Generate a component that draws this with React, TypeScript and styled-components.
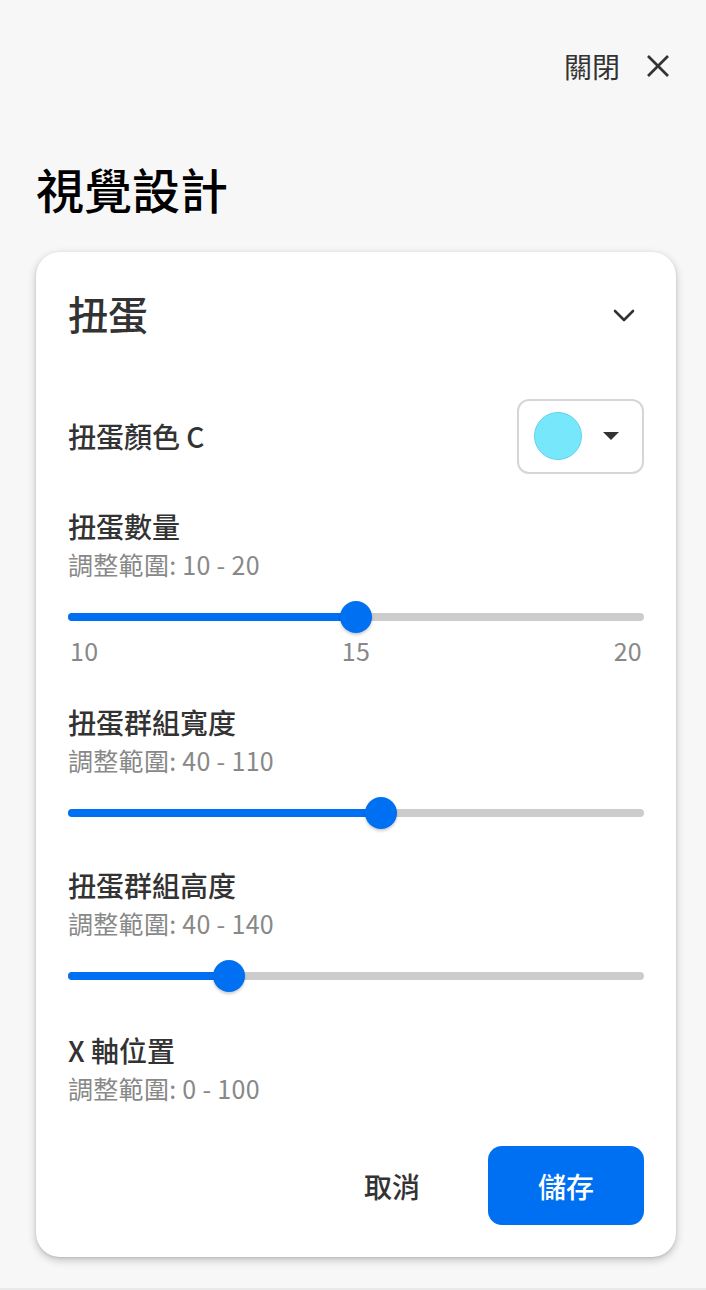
import React from "react";
import styled, { createGlobalStyle } from "styled-components";

const GlobalStyle = createGlobalStyle`
  html, body {
    margin: 0;
    padding: 0;
    background: #f7f7f7;
  }
  body {
    font-family: "Noto Sans CJK TC", "Noto Sans", sans-serif;
    -webkit-font-smoothing: antialiased;
  }
  * { box-sizing: border-box; }
`;

const BLUE = "#0070f3";

const Page = styled.div`
  padding: 0 30px 0 36px;
  display: flex;
  flex-direction: column;
`;

const TopBar = styled.div`
  margin-top: 43px;
  height: 46px;
  display: flex;
  justify-content: flex-end;
  align-items: center;
`;

const CloseButton = styled.button`
  display: flex;
  align-items: center;
  gap: 26px;
  background: none;
  border: 0;
  padding: 0;
  margin-right: 6px;
  font-family: inherit;
  font-size: 28px;
  line-height: 1;
  color: #333;
  cursor: pointer;
`;

const PageTitle = styled.h1`
  margin: 69px 0 34px 0;
  font-size: 48px;
  line-height: 60px;
  font-weight: 500;
  color: #000;
`;

const Card = styled.section`
  background: #fff;
  border-radius: 24px;
  padding: 32px;
  box-shadow: 0 3px 9px rgba(0, 0, 0, 0.22), 0 1px 3px rgba(0, 0, 0, 0.1);
  display: flex;
  flex-direction: column;
`;

const CardHeader = styled.div`
  height: 64px;
  display: flex;
  justify-content: space-between;
  align-items: center;
`;

const CardTitle = styled.h2`
  margin: 0 0 6px 0;
  font-size: 40px;
  line-height: 1;
  font-weight: 500;
  color: #333;
`;

const IconButton = styled.button`
  background: none;
  border: 0;
  padding: 0;
  margin-right: 8px;
  display: flex;
  align-items: center;
  color: #333;
  cursor: pointer;
`;

const ColorRow = styled.div`
  margin-top: 51px;
  height: 74px;
  display: flex;
  justify-content: space-between;
  align-items: center;
`;

const Label = styled.div`
  font-size: 28px;
  line-height: 36px;
  font-weight: 500;
  color: #333;
`;

const SwatchButton = styled.button`
  width: 127px;
  height: 75px;
  border: 2px solid #d6d6d6;
  border-radius: 12px;
  background: #fff;
  padding: 0 23px 0 15px;
  display: flex;
  align-items: center;
  justify-content: space-between;
  cursor: pointer;
`;

const Swatch = styled.span<{ $color: string }>`
  width: 48px;
  height: 48px;
  border-radius: 50%;
  background: ${(p) => p.$color};
  border: 1.5px solid #62d2ea;
`;

const Caret = styled.span`
  width: 0;
  height: 0;
  border-left: 8.5px solid transparent;
  border-right: 8.5px solid transparent;
  border-top: 8px solid #333;
`;

const Section = styled.div<{ $gap: number }>`
  margin-top: ${(p) => p.$gap}px;
  display: flex;
  flex-direction: column;
`;

const SubText = styled.div`
  margin-top: 4px;
  font-size: 25px;
  line-height: 32px;
  letter-spacing: 0.3px;
  color: #888;
`;

const SliderRoot = styled.div`
  margin-top: 21px;
  height: 32px;
  display: flex;
  align-items: center;
`;

const Rail = styled.div`
  position: relative;
  width: 100%;
  height: 8px;
  border-radius: 4px;
  background: #cccccc;
`;

const Fill = styled.div`
  position: absolute;
  left: 0;
  top: 0;
  bottom: 0;
  border-radius: 4px;
  background: ${BLUE};
`;

const Thumb = styled.div`
  position: absolute;
  top: 50%;
  width: 32px;
  height: 32px;
  border-radius: 50%;
  background: ${BLUE};
  transform: translate(-50%, -50%);
  box-shadow: 0 2px 3px rgba(0, 0, 0, 0.2);
`;

const Ticks = styled.div`
  margin-top: 3px;
  display: flex;
  justify-content: space-between;
  padding: 0 2px 0 2px;
  font-size: 25px;
  line-height: 28px;
  letter-spacing: 0.3px;
  color: #888;
`;

const Actions = styled.div`
  margin-top: 42px;
  display: flex;
  justify-content: flex-end;
  gap: 18px;
`;

const ActionButton = styled.button<{ $primary?: boolean }>`
  width: 156px;
  height: 79px;
  border: 0;
  border-radius: 14px;
  font-family: inherit;
  font-size: 28px;
  font-weight: 500;
  color: ${(p) => (p.$primary ? "#fff" : "#333")};
  background: ${(p) => (p.$primary ? BLUE : "transparent")};
  cursor: pointer;
`;

const BottomBand = styled.div`
  margin: 31px -30px 0 -36px;
  height: 12px;
  background: #e9e9e9;
`;

type SliderProps = { min: number; max: number; value: number; ticks?: boolean };

function Slider({ min, max, value, ticks }: SliderProps) {
  const pct = ((value - min) / (max - min)) * 100;
  return (
    <>
      <SliderRoot>
        <Rail>
          <Fill style={{ width: `${pct}%` }} />
          <Thumb style={{ left: `${pct}%` }} />
        </Rail>
      </SliderRoot>
      {ticks && (
        <Ticks>
          <span>{min}</span>
          <span>{value}</span>
          <span>{max}</span>
        </Ticks>
      )}
    </>
  );
}

const CloseIcon = () => (
  <svg width="24" height="24" viewBox="0 0 24 24" fill="none" stroke="currentColor" strokeWidth="2.6" strokeLinecap="butt">
    <line x1="2" y1="2" x2="22" y2="22" />
    <line x1="22" y1="2" x2="2" y2="22" />
  </svg>
);

const ChevronDown = () => (
  <svg width="24" height="16" viewBox="0 0 24 16" fill="none" stroke="currentColor" strokeWidth="2.6" strokeLinecap="round" strokeLinejoin="round">
    <polyline points="3,3 12,12 21,3" />
  </svg>
);

export default function App() {
  return (
    <>
      <GlobalStyle />
      <Page>
        <TopBar>
          <CloseButton>
            關閉
            <CloseIcon />
          </CloseButton>
        </TopBar>
        <PageTitle>視覺設計</PageTitle>
        <Card>
          <CardHeader>
            <CardTitle>扭蛋</CardTitle>
            <IconButton aria-label="collapse">
              <ChevronDown />
            </IconButton>
          </CardHeader>
          <ColorRow>
            <Label>扭蛋顏色 C</Label>
            <SwatchButton>
              <Swatch $color="#77e8fc" />
              <Caret />
            </SwatchButton>
          </ColorRow>
          <Section $gap={35}>
            <Label>扭蛋數量</Label>
            <SubText>調整範圍: 10 - 20</SubText>
            <Slider min={10} max={20} value={15} ticks />
          </Section>
          <Section $gap={40}>
            <Label>扭蛋群組寬度</Label>
            <SubText>調整範圍: 40 - 110</SubText>
            <Slider min={40} max={110} value={78} />
          </Section>
          <Section $gap={38}>
            <Label>扭蛋群組高度</Label>
            <SubText>調整範圍: 40 - 140</SubText>
            <Slider min={40} max={140} value={68} />
          </Section>
          <Section $gap={40}>
            <Label>X 軸位置</Label>
            <SubText>調整範圍: 0 - 100</SubText>
          </Section>
          <Actions>
            <ActionButton>取消</ActionButton>
            <ActionButton $primary>儲存</ActionButton>
          </Actions>
        </Card>
        <BottomBand />
      </Page>
    </>
  );
}
